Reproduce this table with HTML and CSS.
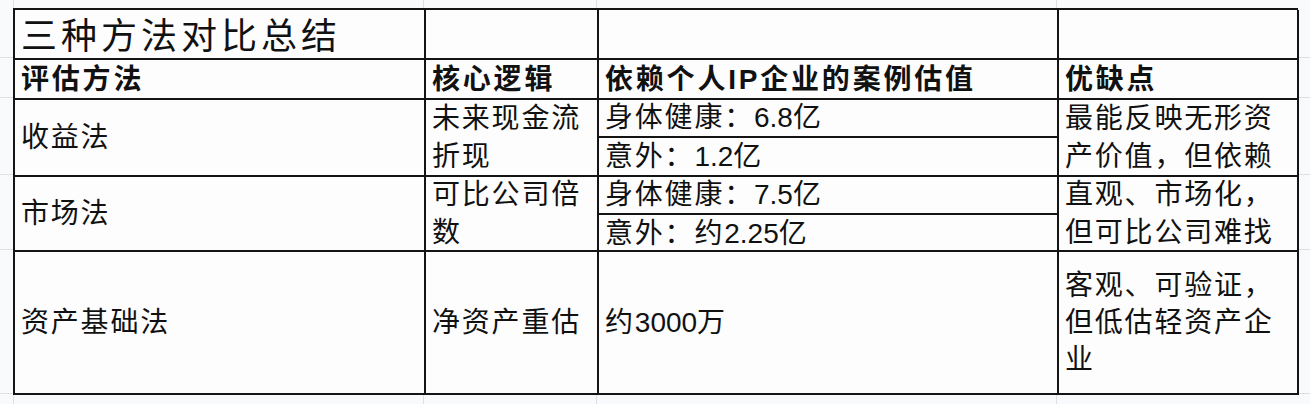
FILE: index.html
```html
<!DOCTYPE html>
<html lang="zh-CN">
<head>
<meta charset="utf-8">
<title>三种方法对比总结</title>
<link rel="stylesheet" href="styles.css">
</head>
<body>
<div class="sheet">
  <div class="cell title">三种方法对比总结</div>
  <div class="cell"></div>
  <div class="cell"></div>
  <div class="cell"></div>

  <div class="cell head">评估方法</div>
  <div class="cell head">核心逻辑</div>
  <div class="cell head">依赖个人IP企业的案例估值</div>
  <div class="cell head">优缺点</div>

  <div class="cell mid">收益法</div>
  <div class="cell mid wrap">未来现金流折现</div>
  <div class="cell split">
    <div class="sub">身体健康：<span class="num">6.8</span>亿</div>
    <div class="sub">意外：<span class="num">1.2</span>亿</div>
  </div>
  <div class="cell mid wrap">最能反映无形资产价值，但依赖</div>

  <div class="cell mid">市场法</div>
  <div class="cell mid wrap">可比公司倍数</div>
  <div class="cell split">
    <div class="sub">身体健康：<span class="num">7.5</span>亿</div>
    <div class="sub">意外：约<span class="num">2.25</span>亿</div>
  </div>
  <div class="cell mid wrap">直观、市场化，但可比公司难找</div>

  <div class="cell mid">资产基础法</div>
  <div class="cell mid">净资产重估</div>
  <div class="cell mid">约<span class="num">3000</span>万</div>
  <div class="cell mid wrap tall">客观、可验证，但低估轻资产企业</div>
</div>
</body>
</html>
```

FILE: styles.css
```css
* { box-sizing: border-box; }

html, body {
  margin: 0;
  padding: 0;
}

body {
  width: 1310px;
  height: 404px;
  overflow: hidden;
  background-color: #f9fafc;
  background-image:
    linear-gradient(to right, transparent 423px, #dedfe2 423px, #dedfe2 424px, transparent 424px),
    linear-gradient(to right, transparent 596px, #dedfe2 596px, #dedfe2 597px, transparent 597px),
    linear-gradient(to right, transparent 1056px, #dedfe2 1056px, #dedfe2 1057px, transparent 1057px),
    linear-gradient(to right, transparent 13px, #dedfe2 13px, #dedfe2 14px, transparent 14px),
    linear-gradient(to bottom, transparent 57px, #dedfe2 57px, #dedfe2 58px, transparent 58px),
    linear-gradient(to bottom, transparent 97px, #dedfe2 97px, #dedfe2 98px, transparent 98px),
    linear-gradient(to bottom, transparent 174px, #dedfe2 174px, #dedfe2 175px, transparent 175px),
    linear-gradient(to bottom, transparent 249px, #dedfe2 249px, #dedfe2 250px, transparent 250px),
    linear-gradient(to bottom, transparent 393px, #dedfe2 393px, #dedfe2 394px, transparent 394px);
  font-family: "Liberation Sans", "Noto Sans CJK SC", sans-serif;
  color: #111;
}

.sheet {
  margin: 8px 0 0 13px;
  width: 1285px;
  display: grid;
  grid-template-columns: 411px 173px 460px 240px;
  grid-template-rows: 50px 40px 77px 75px 143px;
  border-top: 2px solid #141414;
  border-left: 2px solid #141414;
  background: #fdfdfe;
}

.cell {
  border-right: 2px solid #141414;
  border-bottom: 2px solid #141414;
  font-size: 28px;
  letter-spacing: 1.8px;
  line-height: 38px;
  padding: 0 6px 0 6px;
  display: flex;
  align-items: center;
  white-space: nowrap;
  overflow: hidden;
}

.num {
  letter-spacing: 0;
}

.title {
  font-size: 36px;
  letter-spacing: 4px;
  align-items: flex-end;
  padding-bottom: 2px;
}

.head {
  font-weight: 700;
  letter-spacing: 2.8px;
  padding-top: 2px;
}

.wrap {
  white-space: normal;
  word-break: break-all;
}

.tall {
  line-height: 37px;
}

.split {
  padding: 0;
  display: grid;
  grid-template-rows: 38px 1fr;
  align-items: stretch;
}

.sub {
  padding: 0 6px;
  display: flex;
  align-items: center;
}

.sub:first-child {
  border-bottom: 2px solid #141414;
}
```
